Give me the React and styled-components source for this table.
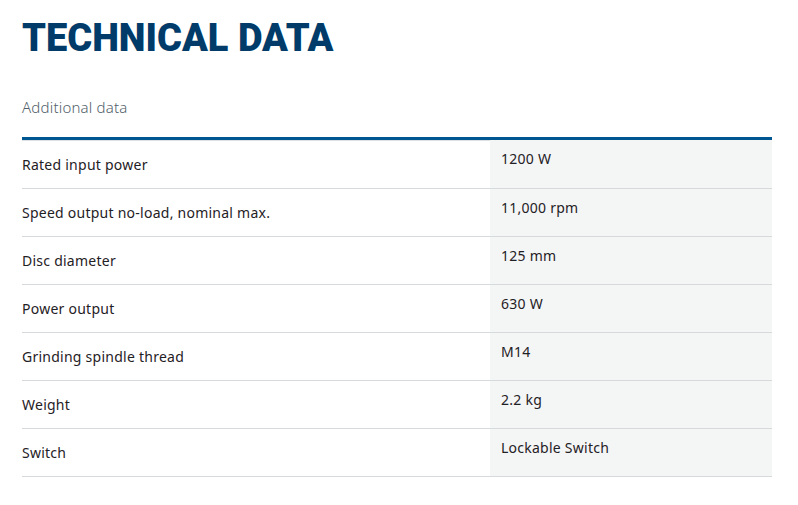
import React from 'react';
import styled, { createGlobalStyle } from 'styled-components';

const GlobalStyle = createGlobalStyle`
    body {
        margin: 0;
        background: #ffffff;
        font-family: 'Noto Sans', 'Open Sans', sans-serif;
        color: #1f2125;
    }
`;

const Page = styled.div`
    width: 750px;
    padding: 14px 26px 0 22px;
`;

const Title = styled.h1`
    margin: 0;
    font-family: Roboto, 'Liberation Sans', sans-serif;
    font-weight: 900;
    font-size: 38px;
    line-height: 48px;
    color: #003b6a;
`;

const Subtitle = styled.h2`
    margin: 35px 0 0;
    font-weight: 300;
    font-size: 15px;
    line-height: 20px;
    letter-spacing: 0.2px;
    color: #525f6b;
`;

const Table = styled.div`
    margin-top: 20px;
    border-top: 3px solid #005691;
    box-shadow: inset 0 1px 0 #dfe2e4;
`;

const Row = styled.div`
    display: grid;
    grid-template-columns: 468px 1fr;
    height: 48px;
    border-bottom: 1px solid #d7dadd;
    box-sizing: border-box;
    ${({ first }) => first && `height: 49px;`}
`;

const Label = styled.div`
    display: flex;
    align-items: center;
    font-size: 14px;
    letter-spacing: 0.25px;
    color: #1f2125;
`;

const Value = styled.div`
    padding: 9px 11px 0;
    background: #f4f5f5;
    font-size: 14px;
    letter-spacing: 0.25px;
    color: #1f2125;
`;

const data = [
    ['Rated input power', '1200 W'],
    ['Speed output no-load, nominal max.', '11,000 rpm'],
    ['Disc diameter', '125 mm'],
    ['Power output', '630 W'],
    ['Grinding spindle thread', 'M14'],
    ['Weight', '2.2 kg'],
    ['Switch', 'Lockable Switch'],
];

const App = () => (
    <Page>
        <GlobalStyle />
        <Title>TECHNICAL DATA</Title>
        <Subtitle>Additional data</Subtitle>
        <Table>
            {data.map(([label, value], i) => (
                <Row key={label} first={i === 0}>
                    <Label>{label}</Label>
                    <Value>{value}</Value>
                </Row>
            ))}
        </Table>
    </Page>
);

export default App;
